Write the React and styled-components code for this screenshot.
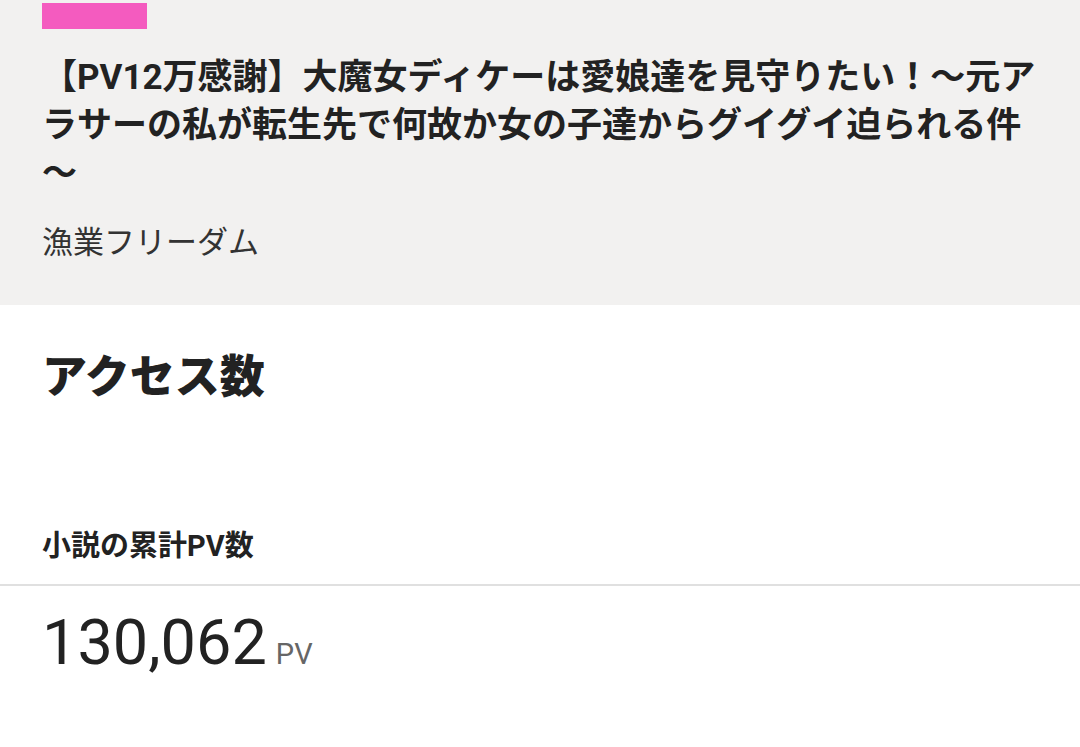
import React from "react";
import styled, { createGlobalStyle } from "styled-components";

const Global = createGlobalStyle`
  html, body { margin: 0; padding: 0; background: #ffffff; }
  body { font-family: Roboto, "Noto Sans CJK JP", sans-serif; color: #222; }
`;

const Page = styled.div`
  width: 1080px;
  display: flex;
  flex-direction: column;
`;

const Header = styled.header`
  background: #f2f1f0;
  padding: 3px 42px 40px;
  display: flex;
  flex-direction: column;
`;

const Tag = styled.div`
  width: 105px;
  height: 26px;
  background: #f45bbf;
`;

const Title = styled.h1`
  margin: 25px 0 0;
  font-size: 35px;
  line-height: 48px;
  font-weight: 700;
  color: #222;
  width: 996px;
  line-break: anywhere;
`;

const Author = styled.div`
  margin-top: 23px;
  font-size: 31px;
  line-height: 44px;
  color: #333;
`;

const Section = styled.section`
  padding: 43px 42px 0;
  display: flex;
  flex-direction: column;
`;

const SectionTitle = styled.h2`
  margin: 0;
  font-size: 45px;
  line-height: 60px;
  font-weight: 900;
  color: #222;
`;

const StatLabel = styled.h3`
  margin: 118px 0 0;
  font-size: 29px;
  line-height: 40px;
  font-weight: 700;
  color: #222;
`;

const Divider = styled.hr`
  margin: 18px 0 0;
  border: none;
  border-top: 2px solid #e0e0e0;
  width: 100%;
`;

const Value = styled.div`
  padding: 24px 42px 0;
  display: flex;
  align-items: baseline;
  gap: 9px;
`;

const Number = styled.span`
  font-family: Roboto, sans-serif;
  font-size: 63px;
  line-height: 66px;
  color: #222;
`;

const Unit = styled.span`
  font-family: Roboto, sans-serif;
  font-size: 29px;
  color: #666;
`;

export default function App() {
  return (
    <Page lang="ja">
      <Global />
      <Header>
        <Tag />
        <Title>
          【PV12万感謝】大魔女ディケーは愛娘達を見守りたい！〜元アラサーの私が転生先で何故か女の子達からグイグイ迫られる件〜
        </Title>
        <Author>漁業フリーダム</Author>
      </Header>
      <Section>
        <SectionTitle>アクセス数</SectionTitle>
        <StatLabel>小説の累計PV数</StatLabel>
      </Section>
      <Divider />
      <Value>
        <Number>130,062</Number>
        <Unit>PV</Unit>
      </Value>
    </Page>
  );
}
